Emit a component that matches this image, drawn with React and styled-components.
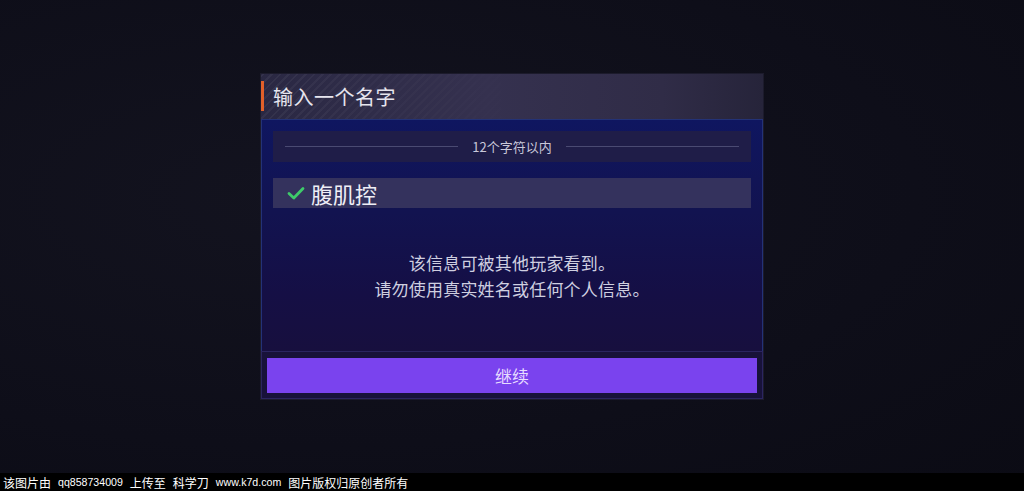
import React from 'react';
import styled, { createGlobalStyle } from 'styled-components';

const GlobalStyle = createGlobalStyle`
  html, body {
    margin: 0;
    padding: 0;
    background: #0d0d18;
  }
  body {
    font-family: 'Noto Sans CJK SC', 'Noto Sans', sans-serif;
  }
`;

const Page = styled.div`
  width: 1024px;
  height: 491px;
  display: flex;
  flex-direction: column;
  background: radial-gradient(ellipse at 30% 40%, #13131f 0%, #0e0e19 60%, #0b0b14 100%);
  overflow: hidden;
`;

const Stage = styled.main`
  flex: 1;
  display: flex;
  align-items: center;
  justify-content: center;
`;

const Modal = styled.section`
  width: 502px;
  display: flex;
  flex-direction: column;
  box-shadow: 0 0 0 1px #1c1b2c;
`;

const Header = styled.header`
  position: relative;
  height: 45px;
  display: flex;
  align-items: center;
  padding-left: 12px;
  background: linear-gradient(90deg, #2a2843 0%, #35314f 45%, #302c47 80%, #26243a 100%);
  overflow: hidden;

  &::before {
    content: '';
    position: absolute;
    inset: 0;
    background: repeating-linear-gradient(
      -45deg,
      rgba(255, 255, 255, 0.05) 0 2px,
      transparent 2px 6px
    );
    -webkit-mask-image: linear-gradient(90deg, #000 0%, rgba(0, 0, 0, 0.4) 30%, transparent 55%);
    mask-image: linear-gradient(90deg, #000 0%, rgba(0, 0, 0, 0.4) 30%, transparent 55%);
  }

  &::after {
    content: '';
    position: absolute;
    left: 0;
    top: 7px;
    bottom: 8px;
    width: 3px;
    background: #e2602a;
  }
`;

const Title = styled.h2`
  position: relative;
  margin: 0;
  font-size: 20px;
  font-weight: 400;
  color: #e6e5ee;
  letter-spacing: 0.5px;
`;

const Body = styled.div`
  height: 232px;
  box-sizing: border-box;
  display: flex;
  flex-direction: column;
  padding: 11px 11px 0;
  border: 1px solid #233277;
  border-bottom: none;
  background: linear-gradient(180deg, #0f1660 0%, #121350 40%, #150f45 75%, #170f3e 100%);
`;

const Hint = styled.div`
  height: 31px;
  display: flex;
  align-items: center;
  gap: 14px;
  padding: 0 12px;
  background: #1f1d48;
  color: #c9c8da;
  font-size: 13px;
`;

const HintLine = styled.span`
  flex: 1;
  height: 1px;
  background: #4a4a72;
`;

const InputRow = styled.div`
  margin-top: 16px;
  height: 30px;
  display: flex;
  align-items: center;
  gap: 6px;
  padding-left: 14px;
  background: #34325d;
  color: #eeeef5;
  font-size: 22px;
`;

const Message = styled.p`
  flex: 1;
  margin: 0;
  display: flex;
  flex-direction: column;
  justify-content: center;
  align-items: center;
  color: #cfcfe0;
  font-size: 17px;
  line-height: 26px;
  letter-spacing: 0.2px;
  padding-bottom: 8px;
`;

const Footer = styled.footer`
  display: flex;
  padding: 6px 5px 5px 5px;
  border: 1px solid #2b2560;
  background: #18123a;
`;

const Button = styled.button`
  flex: 1;
  height: 35px;
  border: none;
  background: #7a43ee;
  color: #e6dcff;
  font-family: inherit;
  font-size: 17px;
  cursor: pointer;
`;

const Watermark = styled.div`
  height: 18px;
  display: flex;
  align-items: center;
  gap: 7px;
  padding-left: 3px;
  background: #000;
  color: #fff;
  font-size: 12px;
  white-space: pre;
`;

const Latin = styled.span`
  font-family: 'Liberation Sans', sans-serif;
  font-size: 10.6px;
`;

const Check = () => (
  <svg width="18" height="14" viewBox="0 0 18 14">
    <path d="M2 7.5 L6.8 12 L16 2.5" fill="none" stroke="#3ecb6a" strokeWidth="2.8" strokeLinecap="round" strokeLinejoin="round" />
  </svg>
);

export default function App() {
  return (
    <Page>
      <GlobalStyle />
      <Stage>
        <Modal>
          <Header>
            <Title>输入一个名字</Title>
          </Header>
          <Body>
            <Hint>
              <HintLine />
              12个字符以内
              <HintLine />
            </Hint>
            <InputRow>
              <Check />
              腹肌控
            </InputRow>
            <Message>
              <span>该信息可被其他玩家看到。</span>
              <span>请勿使用真实姓名或任何个人信息。</span>
            </Message>
          </Body>
          <Footer>
            <Button>继续</Button>
          </Footer>
        </Modal>
      </Stage>
      <Watermark>
        <span>该图片由</span>
        <Latin>qq858734009</Latin>
        <span>上传至</span>
        <span>科学刀</span>
        <Latin>www.k7d.com</Latin>
        <span>图片版权归原创者所有</span>
      </Watermark>
    </Page>
  );
}
